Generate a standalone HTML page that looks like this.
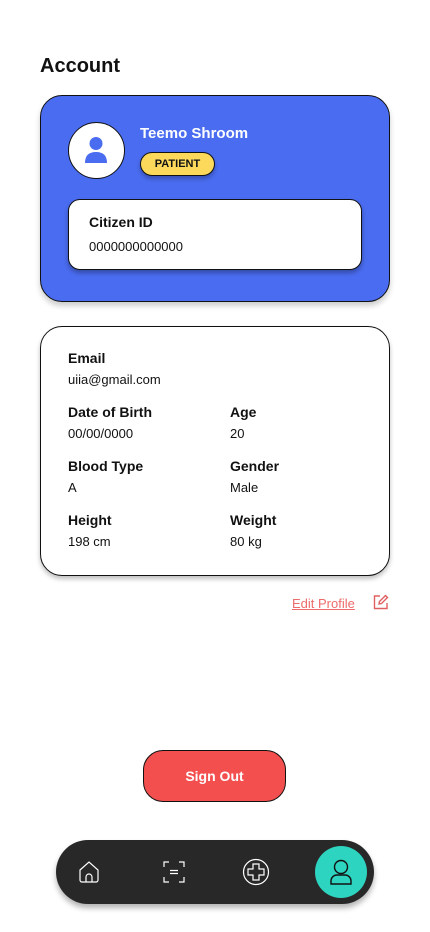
<!DOCTYPE html>
<html><head><meta charset="utf-8"><style>
*{margin:0;padding:0;box-sizing:border-box}
body{width:430px;height:932px;background:#fff;font-family:"Liberation Sans",sans-serif;position:relative;overflow:hidden;color:#111}
.a{position:absolute;white-space:nowrap}
.lbl{font-size:14px;font-weight:bold;line-height:16px}
.val{font-size:13px;line-height:16px}
</style></head><body>
<div class="a" style="left:40px;top:54px;font-size:20px;font-weight:bold;line-height:24px">Account</div>
<div class="a" style="left:40px;top:95px;width:350px;height:207px;background:#4a6cf0;border:1px solid #111;border-radius:22px;box-shadow:0 4px 6px rgba(0,0,0,.2)"></div>
<div class="a" style="left:68px;top:122px;width:57px;height:57px;border-radius:50%;background:#fff;border:1px solid #111"></div>
<svg class="a" style="left:84px;top:136px" width="24" height="28" viewBox="0 0 24 28"><circle cx="12" cy="7.5" r="6.5" fill="#4a6cf0"/><path d="M1 27 Q1 16 12 16 Q23 16 23 27 Z" fill="#4a6cf0"/></svg>
<div class="a" style="left:140px;top:125px;font-size:15px;font-weight:bold;color:#fff;line-height:18px">Teemo Shroom</div>
<div class="a" style="left:140px;top:152px;width:75px;height:24px;background:#fcd95b;border:1px solid #111;border-radius:12px;font-size:11px;font-weight:bold;text-align:center;line-height:22px;box-shadow:0 3px 4px rgba(0,0,0,.25)">PATIENT</div>
<div class="a" style="left:68px;top:199px;width:294px;height:71px;background:#fff;border:1px solid #111;border-radius:12px;box-shadow:0 3px 5px rgba(0,0,0,.3)"></div>
<div class="a lbl" style="left:89px;top:214px">Citizen ID</div>
<div class="a val" style="left:89px;top:239px">0000000000000</div>
<div class="a" style="left:40px;top:326px;width:350px;height:250px;background:#fff;border:1px solid #111;border-radius:22px;box-shadow:0 3px 5px rgba(0,0,0,.25)"></div>
<div class="a lbl" style="left:68px;top:350px">Email</div>
<div class="a val" style="left:68px;top:372px">uiia@gmail.com</div>
<div class="a lbl" style="left:68px;top:404px">Date of Birth</div>
<div class="a val" style="left:68px;top:426px">00/00/0000</div>
<div class="a lbl" style="left:230px;top:404px">Age</div>
<div class="a val" style="left:230px;top:426px">20</div>
<div class="a lbl" style="left:68px;top:458px">Blood Type</div>
<div class="a val" style="left:68px;top:480px">A</div>
<div class="a lbl" style="left:230px;top:458px">Gender</div>
<div class="a val" style="left:230px;top:480px">Male</div>
<div class="a lbl" style="left:68px;top:512px">Height</div>
<div class="a val" style="left:68px;top:534px">198 cm</div>
<div class="a lbl" style="left:230px;top:512px">Weight</div>
<div class="a val" style="left:230px;top:534px">80 kg</div>
<div class="a" style="left:292px;top:596px;font-size:13px;color:#ee6b6b;text-decoration:underline;line-height:16px">Edit Profile</div>
<svg class="a" style="left:372px;top:594px" width="17" height="17" viewBox="0 0 17 17" fill="none" stroke="#e06060" stroke-width="1.4"><path d="M8 2H2.5v12.5H15V9"/><path d="M7 10l0.5-2.5L13.5 1.5l2 2L9.5 9.5z"/></svg>
<div class="a" style="left:143px;top:750px;width:143px;height:52px;background:#f44f4f;border:1px solid #111;border-radius:20px;color:#fff;font-size:14px;font-weight:bold;text-align:center;line-height:50px">Sign Out</div>
<div class="a" style="left:56px;top:840px;width:318px;height:64px;background:#282828;border-radius:32px;box-shadow:0 4px 6px rgba(0,0,0,.3)"></div>
<svg class="a" style="left:78px;top:860px" width="22" height="24" viewBox="0 0 22 24" fill="none" stroke="#fff" stroke-width="1.2"><path d="M2 10L11 2l9 8v10a2 2 0 0 1-2 2H4a2 2 0 0 1-2-2z"/><path d="M8 22v-5a3 3 0 0 1 6 0v5"/></svg>
<svg class="a" style="left:163px;top:861px" width="22" height="22" viewBox="0 0 22 22" fill="none" stroke="#fff" stroke-width="1.2"><path d="M1 6V1h5M16 1h5v5M21 16v5h-5M6 21H1v-5M7 9.5h8M7 12.5h8"/></svg>
<svg class="a" style="left:242px;top:858px" width="28" height="28" viewBox="0 0 28 28" fill="none" stroke="#fff" stroke-width="1.2"><circle cx="14" cy="14" r="12.5"/><path d="M11 6h6v5h5v6h-5v5h-6v-5H6v-6h5z"/></svg>
<div class="a" style="left:315px;top:846px;width:52px;height:52px;border-radius:50%;background:#2dd4bf"></div>
<svg class="a" style="left:329px;top:859px" width="24" height="26" viewBox="0 0 24 26" fill="none" stroke="#111" stroke-width="1.4"><circle cx="12" cy="8" r="6.5"/><path d="M2 25v-3a6 6 0 0 1 6-6h8a6 6 0 0 1 6 6v3z"/></svg>
</body></html>
